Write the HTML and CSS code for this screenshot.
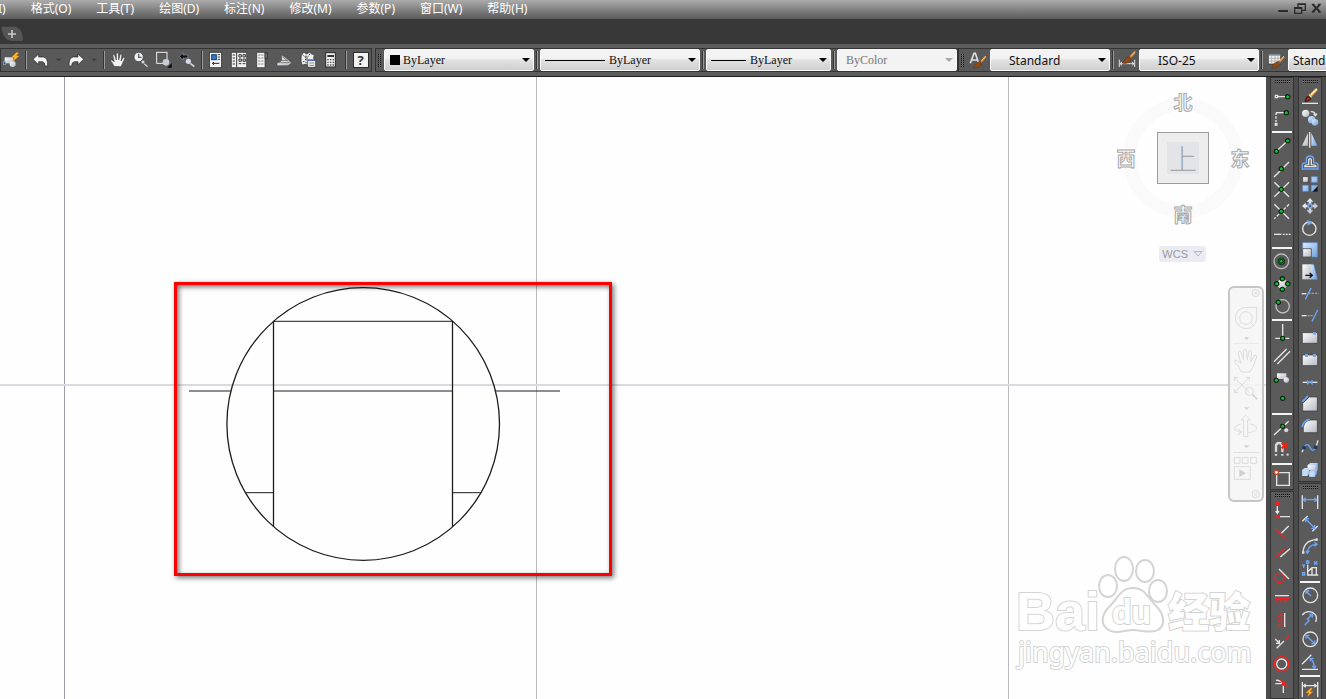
FILE: index.html
```html
<!DOCTYPE html>
<html lang="zh-CN">
<head>
<meta charset="utf-8">
<title>CAD</title>
<link rel="stylesheet" href="styles.css">
</head>
<body>
<svg class="defs" aria-hidden="true">
  <defs>
    <linearGradient id="silver" x1="0" y1="0" x2="1" y2="1"><stop offset="0" stop-color="#fff"/><stop offset="1" stop-color="#b4b8c2"/></linearGradient>
    <linearGradient id="sky" x1="0" y1="0" x2="1" y2="1"><stop offset="0" stop-color="#e2edfb"/><stop offset="1" stop-color="#6d9fe0"/></linearGradient>
    <g id="node"><circle r="8" fill="#0b240e"/><circle r="4.5" fill="#12c02f"/></g>
    <g id="brush"><path d="M20 -20 L4 -2" stroke="#e8892b" stroke-width="6"/><path d="M20 -22 L8 -8" stroke="#ffd79a" stroke-width="2"/><path d="M5 -6 Q-12 -4 -17 14 Q-2 18 8 5Z" fill="#8a4a1c" stroke="#4d260c" stroke-width="1"/></g>
  </defs>
</svg>

<nav class="menubar">
  <div class="menus">
    <button class="menu" aria-label="插入(I)">I)</button>
    <button class="menu">格式(O)</button>
    <button class="menu">工具(T)</button>
    <button class="menu">绘图(D)</button>
    <button class="menu">标注(N)</button>
    <button class="menu">修改(M)</button>
    <button class="menu">参数(P)</button>
    <button class="menu">窗口(W)</button>
    <button class="menu">帮助(H)</button>
  </div>
  <div class="window-controls">
    <button aria-label="最小化"><svg viewBox="1338 0 48 57"><path d="M1345 33h29" stroke="#2b2b2b" stroke-width="6"/></svg></button>
    <button aria-label="还原"><svg viewBox="1386 0 48 57"><path d="M1404 21V12h22v19h-9M1394 23h21v17h-21zM1394 25h21M1404 13h22" fill="none" stroke="#2b2b2b" stroke-width="4"/></svg></button>
    <button aria-label="关闭"><svg viewBox="1434 0 48 57"><path d="M1448 13l22 23M1470 13l-22 23" stroke="#2b2b2b" stroke-width="6"/><path d="M1445 13h9M1464 13h9M1445 36h9M1464 36h9" stroke="#2b2b2b" stroke-width="3"/></svg></button>
  </div>
</nav>

<div class="tabstrip">
  <button class="new-tab" aria-label="新建"><svg viewBox="0 75 72 54"><path d="M4 80H42Q68 82 69 122H32Q10 120 4 80Z" fill="#565656"/><path d="M24 102h24M36 90v24" stroke="#c9c9c9" stroke-width="5"/></svg></button>
</div>

<div class="toolbar-row">
  <div class="toolbar first">
    <button class="tool" aria-label="动作"><svg viewBox="0 147 69 66"><path d="M14 172h26v18H14z" fill="url(#silver)"/><circle cx="38" cy="192" r="9" fill="url(#silver)"/><rect x="10" y="186" width="7" height="7" fill="#26457e" stroke="#8db7f2" stroke-width="2"/><path d="M50 157L35 172l9 1-7 13 20-18-9-1 8-8z" fill="#ffb428" stroke="#f2961a"/></svg></button>
    <span class="sep"></span>
    <button class="tool" aria-label="放弃"><svg viewBox="87 147 69 66"><path d="M99 178l17-16v9h14q14 2 13 27h-8q0-12-8-13h-11v9z" fill="#f4f4f4" stroke="#222" stroke-width="2"/></svg></button>
    <button class="drop" aria-label="放弃列表"><svg viewBox="156 147 39 66"><path d="M168 176h16l-8 8z" fill="#373e49"/></svg></button>
    <button class="tool" aria-label="重做"><svg viewBox="195 147 69 66"><path d="M251 178l-17-16v9h-14q-14 2-13 27h8q0-12 8-13h11v9z" fill="#f4f4f4" stroke="#222" stroke-width="2"/></svg></button>
    <button class="drop" aria-label="重做列表"><svg viewBox="264 147 39 66"><path d="M275 176h16l-8 8z" fill="#373e49"/></svg></button>
    <span class="sep"></span>
    <button class="tool" aria-label="平移"><svg viewBox="321 147 69 66"><path d="M342 199q-3-9-10-16l3-4 8 6-5-20 5-2 6 17 0-21h6l1 21 5-18 5 1-3 20 7-11 5 2-8 17-4 9z" fill="#f4f4f4" stroke="#2a2a2a" stroke-width="1.5"/></svg></button>
    <button class="tool" aria-label="实时缩放"><svg viewBox="390 147 69 66"><circle cx="416" cy="171" r="14" fill="#eff1f1" stroke="#333" stroke-width="2"/><path d="M416 161v11h9" fill="none" stroke="#52606a" stroke-width="4"/><circle cx="429" cy="186" r="6" fill="#ccd6e6" stroke="#444" stroke-width="2"/><path d="M433 191l10 9" stroke="#c9ccd6" stroke-width="4"/></svg></button>
    <button class="tool" aria-label="窗口缩放"><svg viewBox="459 147 69 66"><rect x="470" y="157" width="31" height="33" fill="none" stroke="#ececec" stroke-width="3"/><circle cx="498" cy="187" r="10" fill="#c8ccda"/><path d="M502 203h13v-13z" fill="#080808"/></svg></button>
    <button class="tool" aria-label="缩放上一个"><svg viewBox="528 147 69 66"><path d="M538 169l11-11v7h14v9h-14v7z" fill="#111" stroke="#8b97a4" stroke-width="2"/><circle cx="565" cy="184" r="8" fill="#d6dae8"/><path d="M571 190l12 10" stroke="#d3d6df" stroke-width="5"/></svg></button>
    <span class="sep"></span>
    <button class="tool" aria-label="特性"><svg viewBox="615 147 69 66"><rect x="629" y="157" width="35" height="46" fill="#f5f5f5" stroke="#292929" stroke-width="2"/><rect x="635" y="164" width="14" height="15" fill="#3378c8" stroke="#163c70" stroke-width="3"/><path d="M653 164h7M653 171h7M653 178h7" stroke="#3b3b3b" stroke-width="3"/><path d="M638 190h20M642 186l-5 4 5 4" fill="none" stroke="#222" stroke-width="3"/></svg></button>
    <button class="tool" aria-label="设计中心"><svg viewBox="684 147 69 66"><path d="M694 157h46v46h-46z" fill="#f2f2f2" stroke="#252525" stroke-width="2"/><path d="M710 157v46M698 165h7M698 174h7M698 183h7M698 192h7" stroke="#333" stroke-width="3"/><path d="M717 164h7v7h-7zM729 164h7v7h-7zM717 177h7v7h-7zM729 177h7v7h-7zM716 191h8M728 191h8" fill="none" stroke="#333" stroke-width="3"/></svg></button>
    <button class="tool" aria-label="工具选项板"><svg viewBox="753 147 69 66"><path d="M770 157h25v46h-25z" fill="#f2f2f2" stroke="#292929" stroke-width="2"/><path d="M795 158h7v18h-7z" fill="#777" stroke="#202020" stroke-width="2"/><path d="M775 165h16M775 174h16M775 183h16M775 192h16" stroke="#a0a0a0" stroke-width="5" stroke-dasharray="6 3"/></svg></button>
    <button class="tool" aria-label="图纸集"><svg viewBox="822 147 69 66"><path d="M831 189l14-7-1-18 18 13 14 11-12 9h-33z" fill="url(#silver)" stroke="#333" stroke-width="1.5"/><path d="M834 188h29l11-3M842 181l22 1M846 170l15 11" fill="none" stroke="#555" stroke-width="2"/></svg></button>
    <button class="tool" aria-label="标记集"><svg viewBox="891 147 69 66"><path d="M904 164l8-7 9 4 8-4 6 5 8 2-2 10 3 10-9 9-10 4-7-4-13 2-2-14z" fill="#eee" stroke="#2c2c2c" stroke-width="2"/><path d="M907 164l25 21M930 162l-23 28M918 158v35" stroke="#333" stroke-width="3" stroke-dasharray="5 4"/><path d="M923 180h24v22h-24z" fill="#f2f2f2" stroke="#222" stroke-width="2"/><path d="M924 181h22" stroke="#4b70ad" stroke-width="4"/><path d="M928 189h15M928 196h15" stroke="#555" stroke-width="2"/></svg></button>
    <button class="tool" aria-label="计算器"><svg viewBox="960 147 69 66"><rect x="977" y="158" width="29" height="43" fill="#eee" stroke="#292929" stroke-width="3"/><path d="M982 168h20" stroke="#333" stroke-width="6"/><path d="M982 179h20M982 187h20M982 195h20" stroke="#444" stroke-width="4" stroke-dasharray="4 4"/></svg></button>
    <span class="sep"></span>
    <button class="tool help" aria-label="帮助"><span>?</span></button>
  </div>

  <div class="toolbar properties">
    <span class="grip"></span>
    <label class="combo color"><select aria-label="颜色"><option>ByLayer</option></select><span class="swatch"></span><span class="caret"></span></label>
    <span class="sep"></span>
    <label class="combo linetype"><select aria-label="线型"><option>ByLayer</option></select><span class="rule"></span><span class="caret"></span></label>
    <span class="sep"></span>
    <label class="combo lineweight"><select aria-label="线宽"><option>ByLayer</option></select><span class="rule"></span><span class="caret"></span></label>
    <span class="sep"></span>
    <label class="combo plot"><select aria-label="打印样式" disabled><option>ByColor</option></select><span class="caret"></span></label>
  </div>

  <div class="toolbar styles">
    <span class="grip"></span>
    <button class="tool" aria-label="文字样式"><svg viewBox="411 147 69 66"><path d="M421 190l11-30h4l10 30M425 180h18" fill="none" stroke="#dedede" stroke-width="5"/><use href="#brush" x="447" y="190"/></svg></button>
    <label class="combo style"><select aria-label="文字样式"><option>Standard</option></select><span class="caret"></span></label>
    <span class="sep"></span>
    <button class="tool" aria-label="标注样式"><svg viewBox="858 147 69 66"><path d="M868 179v22M914 179v22M870 191h42M876 186l-6 5 6 5M906 186l6 5-6 5" fill="none" stroke="#e2e2e2" stroke-width="3"/><use href="#brush" x="895" y="176"/></svg></button>
    <label class="combo style"><select aria-label="标注样式"><option>ISO-25</option></select><span class="caret"></span></label>
    <span class="sep"></span>
    <button class="tool" aria-label="表格样式"><svg viewBox="1305 147 69 66"><rect x="1315" y="161" width="37" height="31" fill="#f4f4f4" stroke="#333" stroke-width="2"/><path d="M1316 164h35" stroke="#7b8793" stroke-width="6"/><path d="M1316 175h35M1316 183h35M1325 167v24M1335 167v24M1344 167v24" stroke="#999" stroke-width="2"/><use href="#brush" x="1342" y="190"/></svg></button>
    <label class="combo table-style"><select aria-label="表格样式"><option>Standard</option></select></label>
  </div>
</div>

<main class="workspace">
  <section class="canvas">
    <svg class="drawing" width="100%" height="100%">
      <path d="M64.500 0V2000" stroke="#9a9aa8"/>
      <path d="M536.500 0V2000M1008.500 0V2000" stroke="#bcbcc0"/>
      <path d="M0 308H3000" stroke="#dadae0" stroke-width="2"/>
      <g fill="none" stroke="#1c1c1c">
        <circle cx="363.200" cy="347" r="136.300" stroke-width="1.300"/>
        <path stroke-width="1.300" d="M273.500 244V449.500M452.500 244V449.500"/>
        <path d="M273 244.300H453M273 314H453M189 314H231M495 314H560M246 415.700H273M453 415.700H481"/>
      </g>
    </svg>
    <div class="highlight"></div>

    <div class="viewcube">
      <span class="north">北</span>
      <span class="west">西</span>
      <button class="top-face"><span>上</span></button>
      <span class="east">东</span>
      <span class="south">南</span>
    </div>
    <button class="wcs">WCS <svg viewBox="0 0 10 6"><path d="M1 .5h8L5 5z"/></svg></button>

    <div class="navbar">
      <button class="n-close" aria-label="关闭"><svg viewBox="24 18 108 42"><circle cx="107" cy="39" r="11"/><path d="M102 34l10 10M112 34l-10 10"/></svg></button>
      <button class="n-wheel" aria-label="导航控制盘"><svg viewBox="24 60 108 132"><path d="M78 82h32v32a32 32 0 1 1-32-32z"/><circle cx="78" cy="114" r="19"/><path d="M55 137l9-9M101 137l-9-9"/><path class="solid" d="M72 172h15l-7 8z"/><path d="M39 192h78"/></svg></button>
      <button class="n-pan" aria-label="平移"><svg viewBox="24 192 108 90"><path d="M62 274q-2-13-17-27-3-9 6-6l12 9-9-31q1-8 8-4l9 24-1-29q5-6 9 0l3 29 5-26q6-5 8 2l-3 31 11-20q8-3 7 5l-11 30-9 14q-14 5-28-1z"/></svg></button>
      <button class="n-zoom" aria-label="缩放"><svg viewBox="24 282 108 111"><path d="M43 292l45 46M88 292l-45 46M43 303v-11h11M77 292h11v11M43 327v11h11"/><circle cx="88" cy="334" r="12"/><path d="M97 343l15 15" stroke-width="6"/><path class="solid" d="M72 382h15l-7 8z"/></svg></button>
      <button class="n-orbit" aria-label="动态观察"><svg viewBox="24 393 108 123"><path d="M71 470v-50h-8l14-14 14 14h-8v50zM63 432c-26 6-24 21 0 25M91 432c26 5 26 22-6 26M53 448l12 8-12 9"/><path class="solid" d="M72 496h15l-7 8z"/></svg></button>
      <button class="n-motion" aria-label="显示运动"><svg viewBox="24 516 108 102"><path d="M39 517h78M43 532h17v18H43zM67 532h17v18H67zM92 532h17v18H92zM43 560h48v38H43z"/><path class="solid" d="M58 568l20 11-20 12z"/></svg></button>
      <button class="n-menu" aria-label="菜单"><svg viewBox="24 618 108 48"><circle cx="107" cy="642" r="11"/><path d="M101 639h12M103 645h8"/></svg></button>
    </div>

    <svg class="watermark" viewBox="0 0 261 130" role="img">
      <g class="paw">
        <ellipse cx="103" cy="36" rx="9" ry="11"/><ellipse cx="119" cy="19" rx="9" ry="12"/><ellipse cx="140" cy="21" rx="9" ry="11"/><ellipse cx="153" cy="41" rx="9" ry="11"/>
        <path d="M128 38c-13 0-16 12-24 19-7 7-9 16-2 22 8 6 17 1 26 1s18 4 25 0c8-5 6-16-1-23-9-8-11-19-24-19z"/>
      </g>
      <text class="wm-brand" x="11" y="80">Bai</text>
      <text class="wm-du" x="107" y="74">du</text>
      <text class="wm-cn" x="163" y="77">经验</text>
      <text class="wm-url" x="13" y="112">jingyan.baidu.com</text>
    </svg>
  </section>

  <aside class="dock">
    <div class="column">
      <div class="palette">
        <span class="hgrip"></span>
        <button aria-label="临时追踪点"><svg viewBox="12 27 72 66"><path d="M28 58h7v7h-7zM36 62h24"/><use href="#node" x="65" y="62"/></svg></button>
        <button aria-label="捕捉自"><svg viewBox="12 93 72 66"><path d="M30 110h26"/><path d="M30 110v31" stroke-dasharray="7 4"/><path class="f" d="M26 141h9v9h-9z"/><use href="#node" x="61" y="110"/></svg></button>
        <span class="hsep"></span>
        <button aria-label="端点"><svg viewBox="12 177 72 66"><path d="M31 226l34-32"/><use href="#node" x="31" y="226"/><use href="#node" x="65" y="194"/></svg></button>
        <button aria-label="中点"><svg viewBox="12 243 72 66"><path d="M24 303l45-45"/><use href="#node" x="46" y="278"/></svg></button>
        <button aria-label="交点"><svg viewBox="12 309 72 66"><path d="M25 319l44 43M69 319l-44 43"/><use href="#node" x="46" y="340"/></svg></button>
        <button aria-label="外观交点"><svg viewBox="12 375 72 66"><path d="M25 385l44 43"/><path d="M69 385l-44 43" stroke-dasharray="9 5"/><use href="#node" x="46" y="406"/></svg></button>
        <button aria-label="延长线"><svg viewBox="12 -21 72 66"><path d="M24 13h22"/><path d="M50 13h24" stroke-dasharray="6 3"/></svg></button>
        <span class="hsep"></span>
        <button aria-label="圆心"><svg viewBox="12 63 72 66"><circle cx="46" cy="94" r="22" stroke="#bcbcbc"/><circle cx="46" cy="94" r="11" fill="#0b240e" stroke="none"/><circle cx="46" cy="94" r="8" stroke="#12b02f" stroke-width="2"/><circle cx="46" cy="94" r="4" fill="#12c02f" stroke="none"/></svg></button>
        <button aria-label="象限点"><svg viewBox="12 129 72 66"><circle class="f" cx="49" cy="162" r="15"/><use href="#node" x="49" y="146"/><use href="#node" x="32" y="161"/><use href="#node" x="65" y="161"/><use href="#node" x="49" y="178"/></svg></button>
        <button aria-label="切点"><svg viewBox="12 195 72 66"><circle cx="50" cy="229" r="20" stroke="#c0c0c0"/><use href="#node" x="37" y="217"/></svg></button>
        <span class="hsep"></span>
        <button aria-label="垂足"><svg viewBox="12 279 72 66"><path d="M50 282v43M28 325h42"/><use href="#node" x="50" y="325"/></svg></button>
        <button aria-label="平行线"><svg viewBox="12 345 72 66"><path d="M24 395l38-38M34 402l38-38"/></svg></button>
        <button aria-label="插入点"><svg viewBox="12 411 72 66"><path class="f" d="M33 430h28v17H33z"/><circle class="f" cx="61" cy="450" r="8"/><use href="#node" x="31" y="451"/></svg></button>
        <button aria-label="节点"><svg viewBox="12 12 72 66"><use href="#node" x="50" y="40"/></svg></button>
        <span class="hsep"></span>
        <button aria-label="最近点"><svg viewBox="12 96 72 66"><path d="M24 150l44-41"/><use href="#node" x="50" y="124"/><circle class="f" cx="61" cy="136" r="6"/></svg></button>
        <button aria-label="无捕捉"><svg viewBox="12 162 72 66"><path d="M30 212v-28q0-10 9-10t10 10v28" stroke-width="7" stroke="#d8d8d8"/><path d="M26 204h8M45 204h8" stroke="#333"/><path d="M47 174l18 16M65 174l-18 16" stroke="#f0230e" stroke-width="6"/><path class="f" d="M62 206h6v6h-6z"/></svg></button>
        <span class="hsep"></span>
        <button aria-label="对象捕捉设置"><svg viewBox="12 246 72 66"><path d="M32 263h38v38H32z"/><circle cx="31" cy="262" r="8" fill="#d6441c" stroke="none"/><circle cx="31" cy="262" r="4" fill="#fff" stroke="none"/></svg></button>
      </div>
      <div class="palette last">
        <span class="hgrip"></span>
        <button aria-label="临时点"><svg viewBox="12 342 72 66"><path class="r" d="M31 353h6v6h-6zM31 392h6v6h-6z"/><path d="M34 363v21M29 378l5 7 5-7M42 395h30"/></svg></button>
        <button aria-label="端点约束"><svg viewBox="12 408 72 66"><path class="r" d="M28 431l29 29"/><path d="M46 445l22-22"/></svg></button>
        <button aria-label="平行约束"><svg viewBox="12 12 72 66"><path class="r" d="M28 54l29-25"/><path d="M43 54l29-25"/></svg></button>
        <button aria-label="相切约束"><svg viewBox="12 78 72 66"><circle class="r" cx="41" cy="117" r="14"/><path d="M39 90l30 30"/></svg></button>
        <button aria-label="水平约束"><svg viewBox="12 144 72 66"><path d="M27 170h42"/><path class="r" d="M27 179h42M37 181l-8 8M50 181l-8 8M63 181l-8 8"/></svg></button>
        <button aria-label="竖直约束"><svg viewBox="12 210 72 66"><path d="M56 222v42"/><path class="r" d="M47 222v42M45 226l-9 9M45 239l-9 9M45 252l-9 9"/></svg></button>
        <button aria-label="垂直约束"><svg viewBox="12 276 72 66"><path d="M28 300l12 13M40 303v10H30M32 328l22-22"/><path class="r" d="M57 304l14-13"/></svg></button>
        <button aria-label="同心约束"><svg viewBox="12 342 72 66"><circle class="r" cx="47" cy="375" r="22"/><circle cx="47" cy="375" r="15"/></svg></button>
        <button aria-label="重合约束"><svg viewBox="12 408 72 66"><path d="M28 434h20M52 440v22M30 424q12-2 20 8"/><path class="r" d="M42 422l24 22M49 431h6v6h-6z"/></svg></button>
      </div>
    </div>

    <div class="column">
      <div class="palette">
        <span class="hgrip"></span>
        <button aria-label="删除"><svg viewBox="96 27 72 66"><path d="M152 40l-22 23" stroke="#f3a63a" stroke-width="9"/><path d="M153 38l-18 18" stroke="#fff0c8"/><path d="M134 59l-4 4" stroke="#ddd" stroke-width="11"/><path d="M127 60q-7 5-9 16 12 0 16-9z" fill="#b03714" stroke="#4b190b"/><path d="M108 82h48"/></svg></button>
        <button aria-label="复制"><svg viewBox="96 93 72 66"><circle class="f" cx="119" cy="112" r="11"/><circle class="s" cx="137" cy="131" r="11"/><circle class="s" cx="147" cy="139" r="10"/><path d="M134 107q13-1 14 11M143 113l5 6 5-6"/></svg></button>
        <button aria-label="镜像"><svg viewBox="96 159 72 66"><path class="f" d="M126 171v38h-18z"/><path class="s" d="M136 171v38h18z"/><path d="M131 168v47"/></svg></button>
        <button aria-label="偏移"><svg viewBox="96 225 72 66"><path class="b" d="M109 279v-12q0-7 12-7v-12q2-8 11-8t11 8v12q13 0 13 8v11z"/><path d="M116 272q0-6 12-6v-15q4-6 8 0v15q14 0 14 6z"/></svg></button>
        <button aria-label="阵列"><svg viewBox="96 291 72 66"><path class="f dark" d="M110 302h17v17h-17z"/><path class="s bl" d="M136 302h18v17h-18zM110 328h17v18h-17zM136 328h18v18h-18z"/><path d="M155 331v16h-16z" fill="#111" stroke="none"/></svg></button>
        <button aria-label="移动"><svg viewBox="96 357 72 66"><path class="f" d="M132 366l10 11h-6v6h-8v-6h-6zM132 414l10-11h-6v-6h-8v6h-6zM108 390l11-10v6h6v8h-6v6zM156 390l-11-10v6h-6v8h6v6z"/><path class="b" d="M127 385h10v10h-10z"/></svg></button>
        <button aria-label="旋转"><svg viewBox="96 423 72 66"><circle cx="130" cy="458" r="20"/><path d="M124 431l15 9-14 9z" fill="#73aaf5" stroke="none"/></svg></button>
        <button aria-label="缩放"><svg viewBox="96 27 72 66"><path class="s bl" d="M110 38h44v43h-44z"/><path class="f dark" d="M110 56h26v25h-26z"/></svg></button>
        <button aria-label="拉伸"><svg viewBox="96 93 72 66"><path class="s bl" d="M132 103h11l11 45h-22z"/><path class="f" d="M109 103h26v45h-26z"/><path d="M118 136h19M131 129l8 7-8 7" stroke="#111"/></svg></button>
        <button aria-label="修剪"><svg viewBox="96 159 72 66"><path d="M107 191h14"/><path class="b" d="M118 208l17-34"/><path class="b" d="M127 190h31" stroke-dasharray="7 3"/></svg></button>
        <button aria-label="延伸"><svg viewBox="96 225 72 66"><path d="M107 257h15"/><path class="b" d="M125 257h17" stroke-dasharray="6 3"/><path class="b" d="M138 274l17-34"/></svg></button>
        <button aria-label="打断于点"><svg viewBox="96 291 72 66"><path class="f dark" d="M109 308h46v32h-46z"/><path d="M141 306h9v8h-9z" fill="#6ea6f6" stroke="none"/></svg></button>
        <button aria-label="打断"><svg viewBox="96 357 72 66"><path class="f dark" d="M109 375h46v32h-46z"/><path d="M117 372h9v9h-9zM141 372h9v9h-9z" fill="#6ea6f6" stroke="none"/></svg></button>
        <button aria-label="合并"><svg viewBox="96 423 72 66"><path d="M110 457h44"/><path d="M123 449l8 7 9-7v16l-9-7-8 7z" fill="#6ea6f6" stroke="none"/></svg></button>
        <button aria-label="倒角"><svg viewBox="96 24 72 66"><path class="f dark" d="M110 55l20-19h24v42h-44z"/><path class="b" d="M109 50l17-17" stroke-width="5"/></svg></button>
        <button aria-label="圆角"><svg viewBox="96 90 72 66"><path class="f dark" d="M112 143v-16q3-20 22-22h20v38z"/><path class="b" d="M109 126q3-20 22-23" stroke-width="5"/></svg></button>
        <button aria-label="光顺曲线"><svg viewBox="96 156 72 66"><path d="M108 202l6-13M150 186l6-20"/><path class="b" d="M114 188q9-19 18-1t18 0"/><circle cx="114" cy="188" r="6" fill="#173f72" stroke="none"/><circle cx="149" cy="187" r="6" fill="#173f72" stroke="none"/></svg></button>
        <button aria-label="分解"><svg viewBox="96 222 72 66"><path class="s" d="M125 240l8-6h22v22l-7 7h-23z"/><path class="f" d="M125 240h23v23h-23z"/><path d="M107 252h20v22h-20zM127 256h19v18h-19z" fill="#555" stroke="none"/><path class="s" d="M109 254l7-5h13v19l-5 5h-15zM130 259l6-5h16v14l-6 7h-16z"/><path d="M109 254h15v19h-15zM130 259h16v16h-16z" fill="#c4daf5" stroke="none"/></svg></button>
      </div>
      <div class="palette last">
        <span class="hgrip"></span>
        <button aria-label="线性标注"><svg viewBox="96 318 72 66"><path d="M109 331v41M155 331v41"/><path class="b" d="M113 344h38M119 338l-7 6 7 6M145 338l7 6-7 6"/></svg></button>
        <button aria-label="对齐标注"><svg viewBox="96 384 72 66"><path d="M109 409l16-16M139 439l16-16"/><path class="b" d="M118 401l28 28M119 411v-10h10M146 420v10h-10"/></svg></button>
        <button aria-label="弧长标注"><svg viewBox="96 -12 72 66"><path d="M111 41q2-38 43-39"/><path class="b" d="M124 42q1-25 28-26M119 35l5 8 6-8M145 10l8 6-8 6"/><circle class="f" cx="112" cy="41" r="4"/><circle class="f" cx="152" cy="2" r="4"/></svg></button>
        <button aria-label="坐标标注"><svg viewBox="96 54 72 66"><path d="M125 77v31h32M125 98l13-12h13v21M138 86v20"/><path class="b" d="M109 76l4 5 4-5M113 81v6M122 66h6v7h-6zM144 67l10 10M154 67l-10 10M110 101h6v7h-6z"/></svg></button>
        <span class="hsep"></span>
        <button aria-label="半径标注"><svg viewBox="96 138 72 66"><circle cx="133" cy="169" r="22"/><path class="b" d="M135 171l-15-14M120 165v-9h10"/></svg></button>
        <button aria-label="折弯标注"><svg viewBox="96 204 72 66"><path d="M109 228q11-15 30-8 18 9 10 29"/><path class="b" d="M116 258l13-13-5-5 14-13M129 226h10v10"/></svg></button>
        <button aria-label="直径标注"><svg viewBox="96 270 72 66"><circle cx="133" cy="301" r="22"/><path class="b" d="M120 289l26 25M120 299v-10h10M146 304v10h-10"/></svg></button>
        <button aria-label="角度标注"><svg viewBox="96 336 72 66"><path d="M108 376l28-29M108 391h48"/><path class="b" d="M135 359q10 12 10 27M133 367v-9h10M139 381l6 6 5-6"/></svg></button>
        <span class="hsep"></span>
        <button aria-label="快速标注"><svg viewBox="96 420 72 66"><path d="M109 429v45M155 429v45M113 440h38M119 435l-6 5 6 5M145 435l6 5-6 5"/><path d="M134 447l-14 14h9l-5 12 17-15h-9l7-11z" fill="#ffad2d" stroke="#f08a16" stroke-width="1"/></svg></button>
      </div>
    </div>
  </aside>
</main>
</body>
</html>
```
FILE: styles.css
```css
*, *::before { box-sizing: border-box; }

body {
  margin: 0;
  height: 100vh;
  display: flex;
  flex-direction: column;
  overflow: hidden;
  background: #5c5c5c;
  font-family: "Noto Sans", "Noto Sans CJK SC", sans-serif;
  font-size: 12px;
}

button {
  margin: 0;
  padding: 0;
  border: 0;
  background: none;
  color: inherit;
  font: inherit;
}

svg { display: block; }
.defs { position: absolute; width: 0; height: 0; }

/* Menu bar */
.menubar {
  flex: none;
  height: 19px;
  display: flex;
  justify-content: space-between;
  background: linear-gradient(#ababab, #5a5a5a);
  color: #fff;
}
.menus { display: flex; gap: 25px; margin-left: -2px; }
.menu { line-height: 17px; padding-bottom: 2px; white-space: nowrap; }
.window-controls { display: flex; padding-right: 2px; }
.window-controls svg { width: 16px; height: 19px; }

/* Drawing tabs */
.tabstrip {
  flex: none;
  height: 25px;
  padding-top: 6px;
  background: #383838;
}
.new-tab svg { width: 24px; height: 18px; }

/* Toolbars */
.toolbar-row {
  flex: none;
  height: 33px;
  padding-top: 4px;
  display: flex;
  overflow: hidden;
  background: #5c5c5c;
  border-bottom: 1px solid #1e1e1e;
}
.toolbar {
  flex: none;
  height: 24px;
  display: flex;
  align-items: center;
  background: #595959;
  outline: 1px solid #343434;
  outline-offset: -1px;
}
.first { margin-right: 3px; }
.properties { padding-right: 1px; }
.tool svg { width: 23px; height: 22px; }
.drop svg { width: 13px; height: 22px; }
.help { width: 23px; }
.help span {
  display: block;
  width: 14px;
  margin: 0 auto;
  background: #f2f2f2;
  outline: 1px solid #2b2b2b;
  color: #333;
  font-size: 13px;
  font-weight: 700;
  line-height: 14px;
}
.sep {
  width: 6px;
  height: 18px;
  background: linear-gradient(90deg, #595959 2px, #343434 2px 3px, #9a9a9a 3px 4px, #595959 4px);
}
.grip {
  width: 9px;
  height: 14px;
  background: repeating-linear-gradient(#595959 0 1px, transparent 1px 2px),
    linear-gradient(90deg, transparent 3px, #111 3px 4px, #777 4px 5px, #111 5px 6px, transparent 6px);
}

.combo { position: relative; height: 22px; }
.combo select {
  appearance: none;
  width: 100%;
  height: 22px;
  padding: 0 16px 0 8px;
  border: 1px solid #fafafa;
  border-radius: 2px;
  background: linear-gradient(#f3f3f3 0 40%, #e2e2e2 50%, #cfcfcf);
  color: #111;
  font: 12px "Liberation Serif", serif;
}
.combo select:disabled { background: #f3f3f3; color: #777; opacity: 1; }
.caret {
  position: absolute;
  right: 4px;
  top: 9px;
  border: 4px solid transparent;
  border-top-color: #000;
  border-bottom: 0;
}
.plot .caret { border-top-color: #aaa; }
.color { width: 150px; }
.linetype { width: 160px; }
.lineweight { width: 125px; }
.plot, .style, .table-style { width: 120px; }
.color select { padding-left: 18px; }
.linetype select { padding-left: 68px; }
.lineweight select { padding-left: 43px; }
.swatch { position: absolute; left: 6px; top: 6px; width: 10px; height: 10px; background: #000; }
.rule { position: absolute; left: 5px; top: 11px; height: 1px; background: #000; }
.linetype .rule { width: 60px; }
.lineweight .rule { width: 35px; }
.style select { padding-left: 18px; font: 12px "Noto Sans", sans-serif; }
.table-style select { padding-left: 4px; font: 12px "Noto Sans", sans-serif; }

/* Workspace */
.workspace { flex: 1; min-height: 0; display: flex; }
.canvas { position: relative; flex: 1; min-width: 0; overflow: hidden; background: #fefefe; }
.drawing { position: absolute; inset: 0; }
.highlight {
  position: absolute;
  left: 174px;
  top: 205px;
  width: 438px;
  height: 294px;
  border: 3px solid #f00;
  box-shadow: 2px 2px 5px #0008, inset 2px 2px 5px #0008;
}

/* View cube */
.viewcube {
  position: absolute;
  right: 11px;
  top: 12px;
  display: grid;
  grid-template-columns: 30px 84px 30px;
  grid-template-rows: 26px 86px 26px;
  grid-template-areas: ". n ." "w t e" ". s .";
  place-items: center;
  color: #fff;
  font-family: "Noto Sans CJK SC", sans-serif;
  font-size: 19px;
  font-weight: 700;
  line-height: 24px;
  -webkit-text-stroke: 1px #a8a8a8;
}
.viewcube::before {
  content: "";
  position: absolute;
  width: 120px;
  height: 120px;
  border: 13px solid #fafafa;
  border-radius: 50%;
}
.viewcube > * { position: relative; }
.north { grid-area: n; }
.west { grid-area: w; }
.east { grid-area: e; }
.south { grid-area: s; }
.top-face {
  grid-area: t;
  width: 52px;
  height: 52px;
  padding: 9px;
  border: 1px solid #9c9c9c;
  background: #ededed;
}
.top-face span {
  display: block;
  background: #e2e4e8;
  color: #a4a7ab;
  font-size: 28px;
  font-weight: 300;
  line-height: 32px;
  -webkit-text-stroke: 0;
}
.wcs {
  position: absolute;
  right: 60px;
  top: 169px;
  height: 16px;
  padding: 0 3px;
  display: flex;
  align-items: center;
  gap: 5px;
  border-radius: 3px;
  background: #ebebf4;
  color: #999;
  font: 11px "Liberation Sans", sans-serif;
}
.wcs svg { width: 10px; height: 6px; fill: none; stroke: #b4b4c8; }

/* Navigation bar */
.navbar {
  position: absolute;
  right: 2px;
  top: 209px;
  width: 36px;
  display: flex;
  flex-direction: column;
  border-radius: 6px;
  background: #f5f5f5e0;
  box-shadow: inset 0 0 0 2px #c6c6c6;
}
.navbar svg { width: 36px; height: 100%; fill: none; stroke: #d6d6d6; stroke-width: 2.5; }
.navbar .solid { fill: #d0d0d0; stroke: none; }
.n-close { height: 14px; }
.n-wheel { height: 44px; }
.n-pan { height: 30px; }
.n-zoom { height: 37px; }
.n-orbit { height: 41px; }
.n-motion { height: 34px; }
.n-menu { height: 16px; }

/* Watermark */
.watermark {
  position: absolute;
  right: 0;
  bottom: 19px;
  width: 261px;
  height: 130px;
  fill: #fff;
  stroke: #d4d4d4;
  stroke-width: 2;
}
.watermark text { paint-order: stroke; font-weight: 900; }
.wm-brand { font-family: "Liberation Sans", sans-serif; font-size: 54px; }
.wm-du { font-family: Lato, sans-serif; font-size: 34px; }
.wm-cn { font-family: "Noto Sans CJK SC", sans-serif; font-size: 41px; }
.watermark .wm-url { font-family: "Noto Sans", sans-serif; font-size: 27px; font-weight: 400; }

/* Docked palettes */
.dock {
  flex: none;
  width: 60px;
  padding: 0 4px;
  display: flex;
  gap: 4px;
  background: #4b4b4b;
}
.column { width: 24px; display: flex; flex-direction: column; gap: 1px; }
.palette {
  flex: none;
  padding: 1px 0;
  display: flex;
  flex-direction: column;
  background: #5b5b5b;
  outline: 1px solid #343434;
  outline-offset: -1px;
}
.last { flex: 1 0 auto; }
.palette svg { width: 24px; height: 22px; fill: none; stroke: #e4e4e4; stroke-width: 4; }
.hgrip {
  height: 7px;
  margin: 0 4px;
  background: repeating-linear-gradient(90deg, #5b5b5b 0 1px, transparent 1px 2px),
    linear-gradient(transparent 2px, #111 2px 3px, #777 3px 4px, #111 4px 5px, transparent 5px);
}
.hsep { height: 6px; margin: 0 2px; border: solid transparent; border-width: 2px 0; background: #f4f4f4 padding-box; }
.palette use { stroke: none; }
.palette .f { fill: url(#silver); stroke: none; }
.palette .s { fill: url(#sky); stroke: none; }
.palette .dark { stroke: #303030; stroke-width: 2; }
.palette .bl { stroke: #5c92dd; stroke-width: 2; }
.palette .r { stroke: #f42222; }
.palette .b { stroke: #6ea6f6; }
```
